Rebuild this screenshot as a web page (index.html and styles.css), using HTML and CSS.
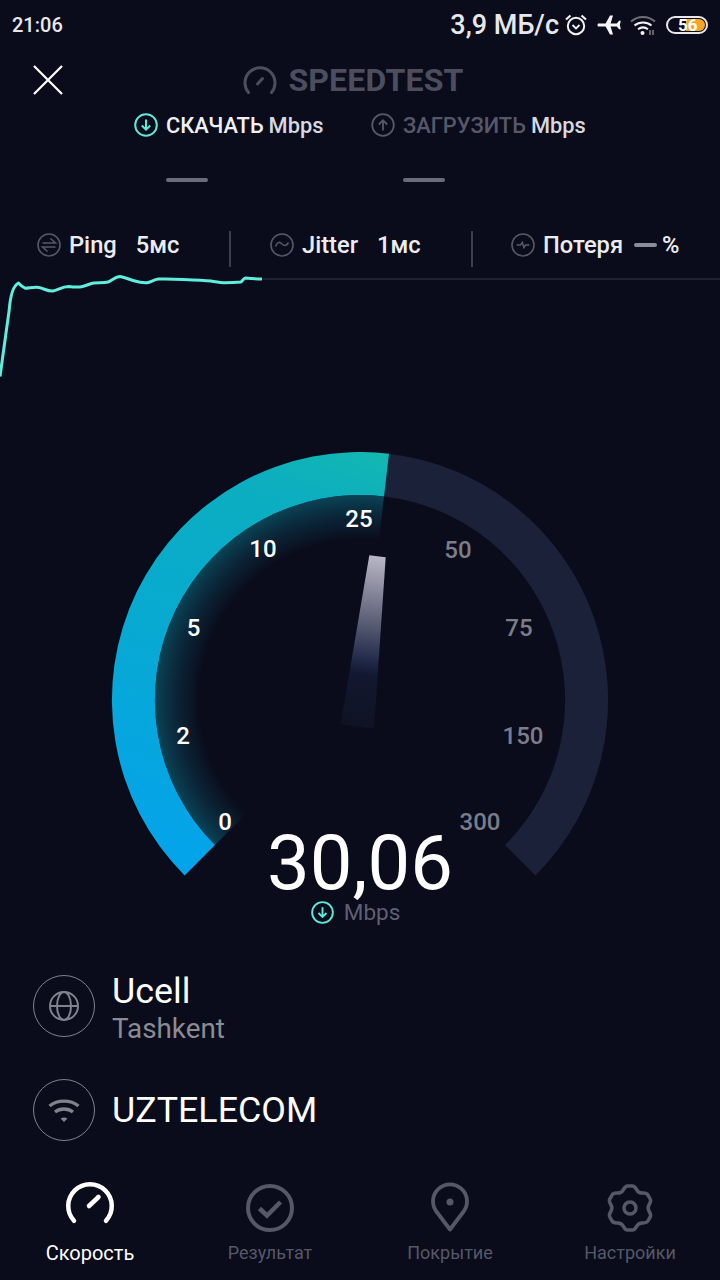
FILE: index.html
```html
<!DOCTYPE html>
<html lang="ru">
<head>
<meta charset="utf-8">
<title>Speedtest</title>
<link rel="stylesheet" href="styles.css">
</head>
<body>
<main class="screen">
  <header class="status">
    <span class="clock">21:06</span>
    <div class="status-right">
      <span class="netspeed">3,9 МБ/с</span>
      <svg class="st-alarm" width="26" height="26" viewBox="0 0 26 26" fill="none" stroke="#f2f2f5">
        <circle cx="13" cy="14" r="8.2" stroke-width="2"/>
        <path d="M9.500 13l3.500 3.500 3.500-3.500" stroke-width="1.800"/>
        <path d="M3 7.500L7.500 3.500M23 7.500L18.500 3.500" stroke-width="2.200"/>
      </svg>
      <svg class="st-plane" width="26" height="24" viewBox="0 0 26 24" fill="#f6f6f8">
        <path d="M1 10.600h7.600L13 2.500h3l-2.400 8.100h6.200l2.300-2.800h1.700l-.9 4.200.9 4.200h-1.700l-2.300-2.800h-6.200L16 21.500h-3l-4.400-8.100H1c-.6-.8-.6-2 0-2.800z"/>
      </svg>
      <svg class="st-wifi" width="28" height="24" viewBox="0 0 28 24" fill="none">
        <path d="M2 8.500C9 2.500 19 2.500 26 8.500" stroke="#6e7078" stroke-width="2"/>
        <path d="M5.500 12.500C10.500 8.500 17.500 8.500 22.500 12.500" stroke="#f2f2f5" stroke-width="2"/>
        <path d="M9 16.200C12 14 16 14 19 16.200" stroke="#f2f2f5" stroke-width="2"/>
        <circle cx="13.500" cy="20" r="2" fill="#f2f2f5"/>
        <path d="M21 17v5M24 17v5" stroke="#8a8c94" stroke-width="1.400"/>
      </svg>
      <div class="battery"><div class="battery-fill"></div><span class="battery-num">56</span></div>
    </div>
  </header>

  <section class="title-bar">
    <svg class="close" width="32" height="30" viewBox="0 0 32 30" fill="none" stroke="#fff" stroke-width="2.200"><path d="M2 1l28 28M30 1L2 29"/></svg>
    <div class="brand">
      <svg width="34" height="30" viewBox="0 0 34 30" fill="none" stroke="#4c4e5e" stroke-width="3" stroke-linecap="round"><path d="M5.500 27.500A15 15 0 1 1 28.500 27.500"/><path d="M14.500 19l5-5.500"/></svg>
      <span class="brand-text">SPEEDTEST</span>
    </div>
  </section>

  <section class="rates">
    <div class="rate">
      <div class="rate-head">
        <svg class="ic24" viewBox="0 0 24 24" fill="none" stroke="#5fe8d8" stroke-width="2"><circle cx="12" cy="12" r="10.800"/><path d="M12 6.500v10M7.800 12.500l4.200 4.200 4.200-4.200"/></svg>
        <span class="rate-label on">СКАЧАТЬ</span><span class="rate-unit">Mbps</span>
      </div>
      <div class="dash"></div>
    </div>
    <div class="rate">
      <div class="rate-head">
        <svg class="ic24" viewBox="0 0 24 24" fill="none" stroke="#56586a" stroke-width="1.800"><circle cx="12" cy="12" r="10.800"/><path d="M12 17.500v-10M7.800 11.500l4.200-4.200 4.200 4.200"/></svg>
        <span class="rate-label">ЗАГРУЗИТЬ</span><span class="rate-unit">Mbps</span>
      </div>
      <div class="dash"></div>
    </div>
  </section>

  <section class="stats">
    <div class="stat stat-ping">
      <svg class="ic24" viewBox="0 0 24 24" fill="none" stroke="#56586a" stroke-width="1.600"><circle cx="12" cy="12" r="11"/><path d="M5.500 10h13l-5-4.500M18.500 14h-13l5 4.500"/></svg>
      <span class="stat-name">Ping</span><span class="stat-val">5мс</span>
    </div>
    <div class="stat stat-jitter">
      <svg class="ic24" viewBox="0 0 24 24" fill="none" stroke="#56586a" stroke-width="1.600"><circle cx="12" cy="12" r="11"/><path d="M5.500 13.500c2-5 4-5 6.500-2.500s4.500 2 6.500-1.500"/></svg>
      <span class="stat-name">Jitter</span><span class="stat-val">1мс</span>
    </div>
    <div class="stat stat-loss">
      <svg class="ic24" viewBox="0 0 24 24" fill="none" stroke="#56586a" stroke-width="1.600"><circle cx="12" cy="12" r="11"/><path d="M5.500 12h4l1.800-2.500 1.600 5 1.600-2.500h4"/></svg>
      <span class="stat-name">Потеря</span><span class="loss-dash"></span><span class="stat-val">%</span>
    </div>
  </section>

  <svg class="chart" width="720" height="100" viewBox="0 0 720 100" fill="none">
    <path d="M262 1H720" stroke="#1f2130" stroke-width="2"/>
    <path d="M0 98.500L9.200 32Q11 9 18.400 5Q21 8 25.300 10.300C30 10 35 8.500 39 9.500C44 10.500 48 13.500 52.800 13C58 12 62 8.500 68.900 8.500C73 9 78 9.500 82.600 8.500C87 7.500 90 5.500 94 5C99 4.500 104 5 108 4C112 2.500 116 -1.500 120 -1.500C124 -1 128 1 133 2.500C138 4 143 5 147 4.800C151 4 154 1.500 158.400 1C165 .8 175 1 183.600 1.500C195 2 205 2.500 211 3C217 4 221 4.800 225 4.800C230 4.800 236 4.500 241 4C243 2 244 0 245.600 0C250 .5 256 1 262 1" stroke="#60eede" stroke-width="3" stroke-linejoin="round"/>
  </svg>

  <section class="gauge">
    <svg class="gauge-svg" width="720" height="480" viewBox="0 0 720 480" fill="none">
      <defs>
        <linearGradient id="arcFill" gradientUnits="userSpaceOnUse" x1="250" y1="420" x2="390" y2="0">
          <stop offset="0" stop-color="#04a4ea"/>
          <stop offset=".5" stop-color="#08aacf"/>
          <stop offset=".85" stop-color="#0caebf"/>
          <stop offset="1" stop-color="#14b8b0"/>
        </linearGradient>
        <radialGradient id="glow" gradientUnits="userSpaceOnUse" cx="360" cy="248" r="206">
          <stop offset=".78" stop-color="#0a5a74" stop-opacity="0"/>
          <stop offset=".88" stop-color="#0a5068" stop-opacity=".32"/>
          <stop offset="1" stop-color="#0a6074" stop-opacity=".68"/>
        </radialGradient>
        <linearGradient id="needleFill" gradientUnits="userSpaceOnUse" x1="377" y1="104" x2="357" y2="278">
          <stop offset="0" stop-color="#b8b8c6"/>
          <stop offset=".32" stop-color="#6a6c82"/>
          <stop offset=".62" stop-color="#1c2544"/>
          <stop offset=".68" stop-color="#121830"/>
          <stop offset="1" stop-color="#0f1222"/>
        </linearGradient>
      </defs>
      <path d="M389 1.700A248 248 0 0 1 535.400 423.400L505 393A205 205 0 0 0 384 44.400Z" fill="#1a2139"/>
      <path d="M184.600 423.400A248 248 0 0 1 389 1.700L384 44.400A205 205 0 0 0 215 393Z" fill="url(#arcFill)"/>
      <path d="M215 393A205 205 0 0 1 384 44.400L360 248Z" fill="url(#glow)"/>
      <path d="M369.300 103.300L385.700 105.300L374 276.700L340.700 272.300Z" fill="url(#needleFill)"/>
      <g class="tick on">
        <text x="225" y="378">0</text>
        <text x="183" y="292">2</text>
        <text x="193.500" y="184">5</text>
        <text x="263" y="105">10</text>
        <text x="359" y="75">25</text>
      </g>
      <g class="tick">
        <text x="458" y="106">50</text>
        <text x="519" y="184">75</text>
        <text x="523" y="292">150</text>
        <text x="480" y="378">300</text>
      </g>
    </svg>
    <div class="reading">
      <div class="reading-value">30,06</div>
      <div class="reading-unit">
        <svg class="ic22" viewBox="0 0 24 24" fill="none" stroke="#5fe8d8" stroke-width="2"><circle cx="12" cy="12" r="10.800"/><path d="M12 6.500v10M7.800 12.500l4.200 4.200 4.200-4.200"/></svg>
        <span>Mbps</span>
      </div>
    </div>
  </section>

  <section class="info">
    <div class="info-row">
      <div class="info-icon">
        <svg width="32" height="32" viewBox="0 0 32 32" fill="none" stroke="#80828c" stroke-width="2"><circle cx="16" cy="16" r="14"/><ellipse cx="16" cy="16" rx="7" ry="14"/><path d="M2 16h28"/></svg>
      </div>
      <div class="info-text two">
        <div class="info-main">Ucell</div>
        <div class="info-sub">Tashkent</div>
      </div>
    </div>
    <div class="info-row">
      <div class="info-icon">
        <svg width="32" height="26" viewBox="0 0 32 26" fill="none" stroke="#80828c" stroke-width="3.400"><path d="M1.500 9C9.500 2.500 22.500 2.500 30.500 9"/><path d="M7 15C12 11 20 11 25 15"/><path d="M12.500 21.500l3.500 3.500 3.500-3.500c-2-1.500-5-1.500-7 0z" fill="#80828c" stroke="none"/></svg>
      </div>
      <div class="info-text"><div class="info-main">UZTELECOM</div></div>
    </div>
  </section>

  <nav class="nav">
    <div class="nav-item active">
      <svg class="nav-icon" viewBox="0 0 50 50" fill="none" stroke="#fff" stroke-width="4.500" stroke-linecap="round"><path d="M9 37.750A21.750 21.750 0 1 1 41 37.750"/><path d="M24 23l9.500-9"/></svg>
      <span>Скорость</span>
    </div>
    <div class="nav-item">
      <svg class="nav-icon" viewBox="0 0 50 50" fill="none" stroke="#565868" stroke-width="4"><circle cx="25" cy="25" r="22"/><path d="M14.500 25.500l7.500 7 13.500-13.500" stroke-width="4.500"/></svg>
      <span>Результат</span>
    </div>
    <div class="nav-item">
      <svg class="nav-icon" viewBox="0 0 50 50" fill="none" stroke="#565868" stroke-width="3.800" stroke-linejoin="round"><path d="M25 46.500L11 28A17 17 0 1 1 39 28Z"/><circle cx="25" cy="19" r="3.500" fill="#565868" stroke="none"/></svg>
      <span>Покрытие</span>
    </div>
    <div class="nav-item">
      <svg class="nav-icon" viewBox="0 0 50 50" fill="none" stroke="#565868" stroke-width="3.500" stroke-linejoin="round"><path d="M22.650 3H27.350Q29.700 3 31.600 6.650Q33.500 10.300 37.600 10.100Q41.700 9.950 42.900 12L45.200 16Q46.400 18.050 44.200 21.500Q42 25 44.200 28.500Q46.400 31.950 45.200 34L42.900 38Q41.700 40.050 37.600 39.900Q33.500 39.700 31.600 43.350Q29.700 47 27.350 47H22.650Q20.300 47 18.400 43.350Q16.500 39.700 12.400 39.900Q8.300 40.050 7.100 38L4.800 34Q3.600 31.950 5.800 28.500Q8 25 5.800 21.500Q3.600 18.050 4.800 16L7.100 12Q8.300 9.950 12.400 10.100Q16.500 10.300 18.400 6.650Q20.300 3 22.650 3Z"/><circle cx="25" cy="25" r="6"/></svg>
      <span>Настройки</span>
    </div>
  </nav>
</main>
</body>
</html>
```
FILE: styles.css
```css
* { box-sizing: border-box; }
html, body { margin: 0; padding: 0; background: #0a0c1b; }
body { font-family: Roboto, "Liberation Sans", sans-serif; color: #fff; }
svg { display: block; flex: none; }
.screen { width: 720px; height: 1280px; overflow: hidden; display: flex; flex-direction: column; }

.status { height: 50px; padding: 0 12px; display: flex; align-items: center; justify-content: space-between; flex: none; }
.clock { font-size: 20px; font-weight: 500; color: #e8e8ec; }
.status-right { display: flex; align-items: center; }
.netspeed { font-size: 27px; font-weight: 500; color: #e8e8ec; margin-right: 4px; }
.st-plane { margin-left: 8px; }
.st-wifi { margin-left: 6px; }
.battery { position: relative; width: 42px; height: 18px; margin-left: 9px; border: 2px solid #e8e8ec; border-radius: 9px; padding: 1px; }
.battery-fill { width: 100%; height: 100%; border-radius: 6px; background: linear-gradient(90deg, transparent 0 46%, #f5a623 46%); }
.battery-num { position: absolute; left: 10px; top: -3px; font-size: 17px; line-height: 20px; font-weight: 700; color: #fff; }

.title-bar { height: 60px; position: relative; display: flex; align-items: center; justify-content: center; flex: none; }
.close { position: absolute; left: 32px; top: 15px; }
.brand { display: flex; align-items: center; gap: 11px; padding-right: 13px; }
.brand-text { font-size: 32px; font-weight: 700; color: #4c4e5e; letter-spacing: .2px; }

.rates { height: 80px; display: flex; padding-left: 134px; flex: none; }
.rate { display: flex; flex-direction: column; align-items: flex-start; }
.rate:first-child { width: 237px; }
.rate-head { height: 30px; display: flex; align-items: center; }
.ic24 { width: 24px; height: 24px; }
.ic22 { width: 23px; height: 23px; }
.rate-label { font-size: 21.800px; font-weight: 500; color: #56586a; margin-left: 8px; }
.rate-label.on { color: #f0f0f4; }
.rate-unit { font-size: 21.800px; font-weight: 500; color: #d8d8e0; margin-left: 5px; }
.dash { width: 42px; height: 4px; border-radius: 2px; background: #6a6c7e; margin: 38px 0 0 32px; }

.stats { height: 58px; display: flex; align-items: center; margin-top: 30px; flex: none; }
.stat { height: 36px; padding-bottom: 8px; display: flex; align-items: center; }
.stat-ping { width: 231px; padding-left: 37px; border-right: 2px solid #3c3e4c; }
.stat-jitter { width: 242px; padding-left: 39px; border-right: 2px solid #3c3e4c; }
.stat-loss { padding-left: 38px; }
.stat-name { font-size: 23.700px; font-weight: 500; color: #ececf0; margin-left: 8px; }
.stat-val { font-size: 23.700px; font-weight: 500; color: #ececf0; margin-left: 19px; }
.stat-loss .stat-val { margin-left: 5px; }
.loss-dash { width: 23px; height: 4px; background: #8a8c9a; border-radius: 2px; margin-left: 11px; }

.chart { overflow: visible; }

.gauge { height: 480px; margin-top: 74px; position: relative; flex: none; }
.tick text { font-family: Roboto, sans-serif; font-size: 24px; font-weight: 500; fill: #7c7d8a; text-anchor: middle; }
.tick.on text { fill: #fff; }
.reading { position: absolute; left: 0; right: 0; top: 375px; display: flex; flex-direction: column; align-items: center; }
.reading-value { font-size: 76px; line-height: 72px; }
.reading-unit { display: flex; align-items: center; gap: 10px; font-size: 22.500px; color: #5e6072; padding-right: 9px; }

.info { display: flex; flex-direction: column; gap: 42px; padding-left: 33px; margin-top: 43px; flex: none; }
.info-row { height: 62px; display: flex; align-items: center; gap: 17px; }
.info-icon { width: 62px; height: 62px; border: 1.500px solid #80828c; border-radius: 50%; display: flex; align-items: center; justify-content: center; }
.info-text { padding-top: 0; }
.info-text.two { padding-top: 4px; }
.info-main { font-size: 35.800px; line-height: 40px; color: #fff; }
.info-sub { font-size: 27.800px; line-height: 34px; margin-top: 1px; color: #8a8c94; }

.nav { margin-top: auto; display: grid; grid-template-columns: repeat(4, 180px); padding-bottom: 15px; flex: none; }
.nav-item { display: flex; flex-direction: column; align-items: center; gap: 8px; font-size: 18px; line-height: 24px; color: #565868; }
.nav-item.active { color: #fff; font-size: 20px; }
.nav-icon { width: 50px; height: 50px; overflow: visible; }
```
